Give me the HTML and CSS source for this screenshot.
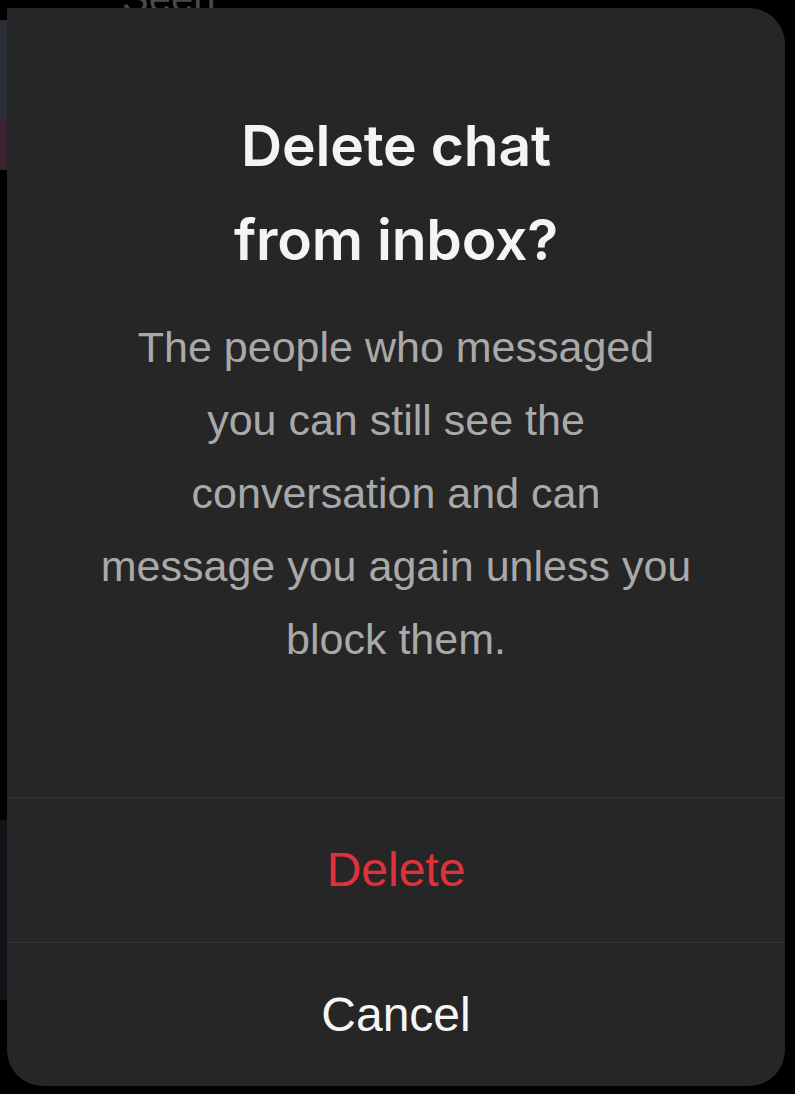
FILE: index.html
```html
<!DOCTYPE html>
<html>
<head>
<meta charset="utf-8">
<link rel="stylesheet" href="styles.css">
</head>
<body>
<div class="backdrop">
  <span class="seen">Seen</span>
  <div class="thumb thumb-a"></div>
  <div class="thumb thumb-b"></div>
  <div class="thumb thumb-c"></div>
</div>
<div class="dialog">
  <div class="content">
    <h1 class="title">Delete chat<br>from inbox?</h1>
    <p class="message">The people who messaged<br>you can still see the<br>conversation and can<br>message you again unless you<br>block them.</p>
  </div>
  <button class="action action-danger">Delete</button>
  <button class="action">Cancel</button>
</div>
</body>
</html>
```
FILE: styles.css
```css
html, body {
  margin: 0;
  padding: 0;
  background: #000;
  width: 795px;
  height: 1094px;
  overflow: hidden;
}
body {
  position: relative;
  font-family: "Liberation Sans", Arial, sans-serif;
}
.backdrop {
  position: absolute;
  inset: 0;
}
.seen {
  position: absolute;
  left: 122px;
  top: -24px;
  font-size: 40px;
  color: #4a4a4a;
}
.thumb {
  position: absolute;
  left: 0;
  width: 8px;
}
.thumb-a { top: 20px; height: 150px; background: #2a2f35; }
.thumb-b { top: 120px; height: 50px; background: #3a2230; }
.thumb-c { top: 820px; height: 180px; background: #101418; }
.dialog {
  position: relative;
  margin: 8px 0 0 7px;
  width: 778px;
  height: 1078px;
  background: #262626;
  border-radius: 0 36px 36px 36px;
  display: flex;
  flex-direction: column;
  overflow: hidden;
}
.content {
  flex: 0 0 789px;
  padding: 91px 40px 0;
  box-sizing: border-box;
  text-align: center;
}
.title {
  margin: 0;
  font-family: Inter, "Liberation Sans", sans-serif;
  font-weight: 600;
  font-size: 57px;
  line-height: 94px;
  color: #f4f4f4;
  letter-spacing: -0.2px;
}
.message {
  margin: 24px 0 0;
  font-size: 43px;
  line-height: 73px;
  color: #a9a9a9;
}
.action {
  flex: 1 1 0;
  border: 0;
  border-top: 1px solid #343434;
  background: transparent;
  font-family: "Liberation Sans", Arial, sans-serif;
  font-size: 48px;
  color: #f5f5f5;
  padding: 0;
  text-align: center;
}
.action-danger {
  color: #e0313d;
}
```
